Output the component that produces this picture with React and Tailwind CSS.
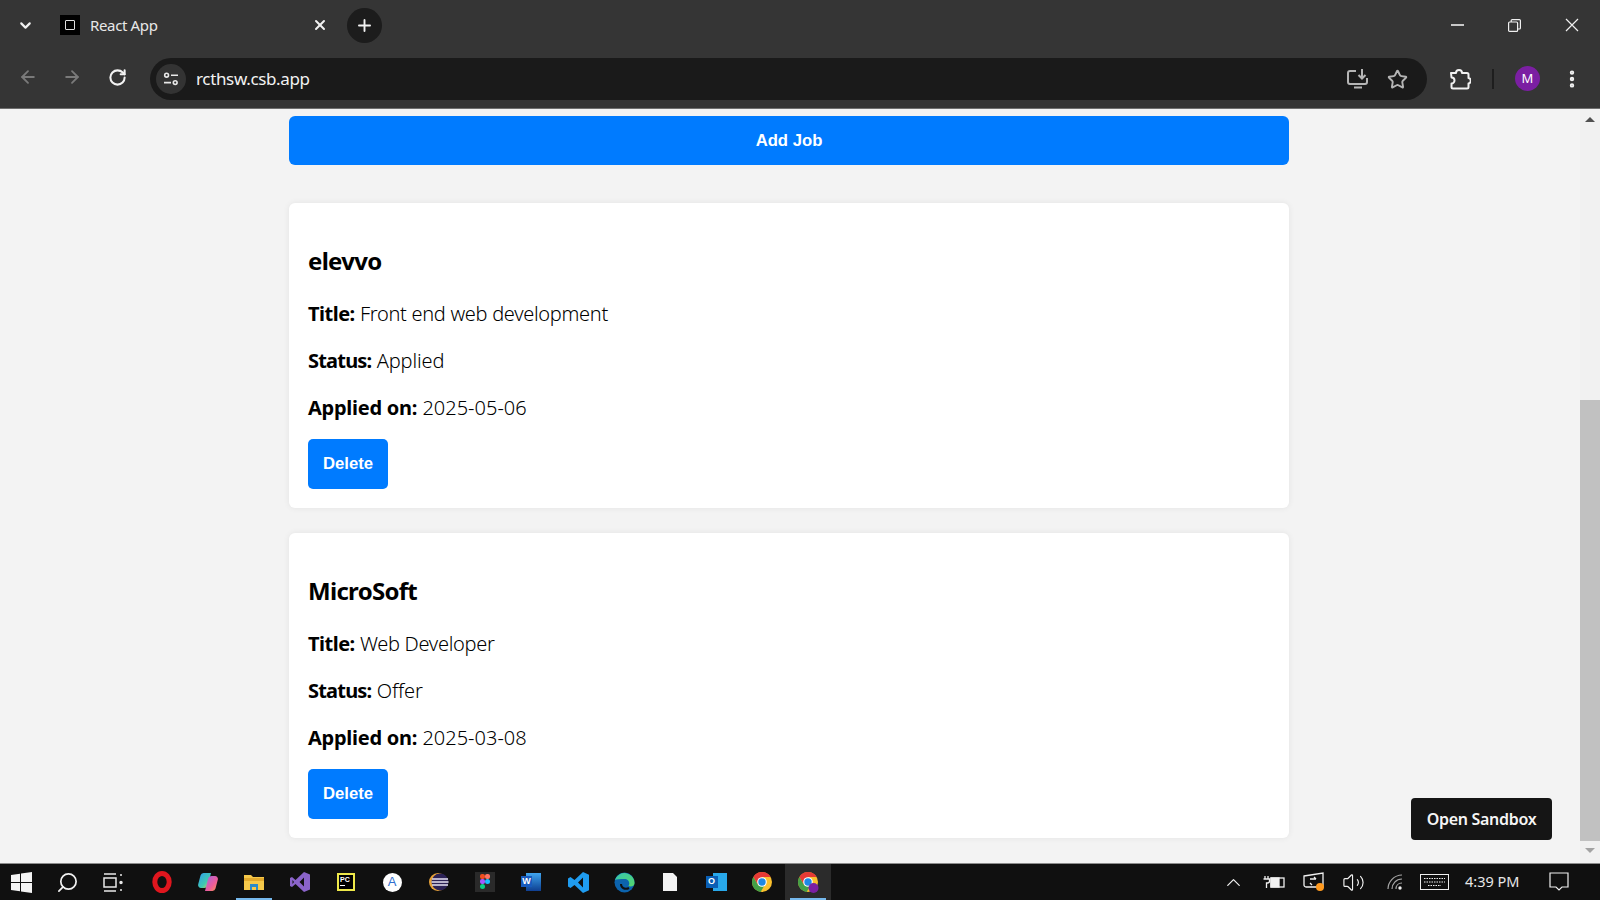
import React from "react";
import {
  ChevronDown,
  X,
  Plus,
  ArrowLeft,
  ArrowRight,
  RotateCw,
  Star,
  EllipsisVertical,
  Search,
  ChevronUp,
  Volume2,
} from "lucide-react";

const jobs = [
  { company: "elevvo", title: "Front end web development", status: "Applied", date: "2025-05-06" },
  { company: "MicroSoft", title: "Web Developer", status: "Offer", date: "2025-03-08" },
];

const Row = ({ label, value, labelClass, valueClass }) => (
  <p className="h-[47px] text-[20px] leading-[47px] text-black">
    <b className={`font-bold ${labelClass}`}>{label}:</b> <span className={`font-light ${valueClass}`}>{value}</span>
  </p>
);

const JobCard = ({ job }) => (
  <div className="h-[305px] rounded-[6px] bg-white px-[19px] pt-[40px] shadow-[0_0_6px_rgba(0,0,0,0.07)]">
    <h3 className="h-[47px] text-[24px] font-bold leading-[36px] tracking-[-0.7px] text-black">{job.company}</h3>
    <Row label="Title" value={job.title} labelClass="tracking-[-0.5px]" valueClass="tracking-[-0.3px]" />
    <Row label="Status" value={job.status} labelClass="tracking-[-0.8px]" valueClass="tracking-[-0.1px]" />
    <Row label="Applied on" value={job.date} labelClass="tracking-[-0.25px]" valueClass="tracking-[0px]" />
    <button className="mt-[8px] h-[50px] w-[80px] rounded-[5px] bg-[#007bff] font-['Liberation_Sans',sans-serif] text-[16.700px] font-bold text-white">
      Delete
    </button>
  </div>
);

const TabStrip = () => (
  <div className="flex h-[57px] items-center pb-[7px] text-[#f1f1f1]">
    <div className="flex w-[50px] justify-center">
      <ChevronDown size={17} strokeWidth={3} />
    </div>
    <div className="ml-[10px] flex h-[20px] w-[20px] items-center justify-center bg-black">
      <div className="h-[10px] w-[10px] rounded-[1px] border border-[#e0e0e0]" />
    </div>
    <span className="ml-[10px] w-[222px] text-[15px] tracking-[-0.35px] text-[#e8e8e8]">React App</span>
    <X size={16} strokeWidth={3} />
    <div className="ml-[19px] flex h-[35px] w-[35px] items-center justify-center rounded-full bg-[#1c1c1c]">
      <Plus size={19} strokeWidth={2.4} />
    </div>
    <div className="ml-auto flex items-center">
      <div className="flex w-[57px] justify-center">
        <div className="h-[2px] w-[13px] bg-[#c8c8c8]" />
      </div>
      <div className="flex w-[57px] justify-center">
        <svg width="13" height="13" viewBox="0 0 13 13" fill="none" stroke="#f0f0f0" strokeWidth="1.2">
          <rect x="0.6" y="3" width="9" height="9.4" rx="1" />
          <path d="M3.2 3V1.6a1 1 0 0 1 1-1h7.2a1 1 0 0 1 1 1V9a1 1 0 0 1-1 1H9.6" />
        </svg>
      </div>
      <div className="flex w-[57px] justify-center">
        <svg width="14" height="14" viewBox="0 0 14 14" stroke="#f0f0f0" strokeWidth="1.2">
          <path d="M1 1l12 12M13 1L1 13" />
        </svg>
      </div>
    </div>
  </div>
);

const Toolbar = () => (
  <div className="flex h-[51px] items-start">
    <div className="flex w-[150px] items-center pl-[18px] pt-[10px]">
      <ArrowLeft size={20} strokeWidth={2.2} className="text-[#7a7a7a]" />
      <ArrowRight size={20} strokeWidth={2.2} className="ml-[24px] text-[#7a7a7a]" />
      <RotateCw size={19} strokeWidth={2.6} className="ml-[26px] text-[#f2f2f2]" />
    </div>
    <div className="mt-[1px] flex h-[42px] w-[1277px] items-center rounded-full bg-[#1a1a1a] pl-[6px] pr-[19px]">
      <div className="flex h-[30px] w-[30px] items-center justify-center rounded-full bg-[#333333]">
        <svg width="16" height="14" viewBox="0 0 16 14" fill="none" stroke="#e8e8e8" strokeWidth="1.6">
          <circle cx="3.6" cy="3.2" r="1.9" />
          <path d="M8 3.2h7M1 10.6h7" />
          <circle cx="12.2" cy="10.6" r="1.9" />
        </svg>
      </div>
      <span className="ml-[10px] text-[17px] tracking-[-0.35px] text-[#f2f2f2]">rcthsw.csb.app</span>
      <div className="ml-auto flex items-center gap-[18px]">
        <svg width="22" height="20" viewBox="0 0 22 20" fill="none" stroke="#b5b5b5" strokeWidth="2">
          <path d="M9 2H3a2 2 0 0 0-2 2v9a2 2 0 0 0 2 2h15a2 2 0 0 0 2-2V9" />
          <path d="M15 0v9M11.5 6l3.5 3.5L18.500 6M7 18.500h8" />
        </svg>
        <Star size={21} strokeWidth={2.2} className="text-[#b5b5b5]" />
      </div>
    </div>
    <div className="flex items-center pt-[9px]">
      <svg className="ml-[22px]" width="22" height="22" viewBox="0 0 22 22" fill="none" stroke="#f2f2f2" strokeWidth="2" strokeLinejoin="round">
        <path d="M2 5h5a3 3 0 0 1 6 0h5a1.500 1.500 0 0 1 1.500 1.500V10a2.800 2.800 0 0 1 0 5.500V19a1.500 1.500 0 0 1-1.500 1.500H4a1.500 1.500 0 0 1-1.500-1.500v-3.500a3 3 0 0 0 0-6z" />
      </svg>
      <div className="ml-[21px] h-[20px] w-[2px] bg-[#1e1e1e]" />
      <div className="ml-[21px] flex h-[25px] w-[25px] items-center justify-center rounded-full bg-[#7b1fa2] text-[13px] text-white">
        M
      </div>
      <EllipsisVertical size={22} strokeWidth={2.8} className="ml-[21px] text-[#f2f2f2]" />
    </div>
  </div>
);

const Scrollbar = () => (
  <div className="flex w-[20px] flex-col items-center bg-[#f1f1f1]">
    <div className="mt-[8px] h-0 w-0 border-x-[5px] border-b-[5px] border-x-transparent border-b-[#505050]" />
    <div className="mt-[278px] h-[441px] w-full bg-[#c1c1c1]" />
    <div className="mt-[7px] h-0 w-0 border-x-[5px] border-t-[5px] border-x-transparent border-t-[#a3a3a3]" />
  </div>
);

const Slot = ({ active, children }) => (
  <div className={`relative flex h-[36px] w-[46px] items-center justify-center ${active === 2 ? "bg-[#2b2b2b]" : ""}`}>
    {children}
    {active ? <div className="absolute bottom-0 left-[5px] right-[5px] h-[2px] bg-[#76b9ed]" /> : null}
  </div>
);

const ChromeLogo = ({ badge }) => (
  <svg width="22" height="22" viewBox="0 0 22 22">
    <circle cx="11" cy="11" r="10" fill="#fbc02d" />
    <path d="M11 1a10 10 0 0 0-8.660 5L6.700 13.500 11 6h8.660A10 10 0 0 0 11 1z" fill="#e53935" />
    <path d="M2.340 6A10 10 0 0 0 9.600 20.900L14 13.500H6.700z" fill="#43a047" />
    <circle cx="11" cy="11" r="4.800" fill="#fff" />
    <circle cx="11" cy="11" r="3.700" fill="#1e88e5" />
    {badge ? <circle cx="16.500" cy="17" r="5" fill="#7b1fa2" /> : null}
  </svg>
);

const Taskbar = () => (
  <div className="flex h-[37px] items-center border-t border-[#8c8c8c] bg-[#101010] text-[#f0f0f0]">
    <div className="-ml-[2px]" />
    <Slot>
      <svg width="21" height="21" viewBox="0 0 21 21" fill="#f4f4f4">
        <path d="M0 3l9-1.300V10H0zM10 1.500L21 0v10H10zM0 11h9v8.300L0 18zM10 11h11v10l-11-1.500z" />
      </svg>
    </Slot>
    <Slot>
      <Search size={23} strokeWidth={1.800} className="-scale-x-100" />
    </Slot>
    <Slot>
      <svg width="21" height="19" viewBox="0 0 21 19" fill="none" stroke="#e8e8e8" strokeWidth="1.500">
        <path d="M1 1h12M1 18h12" />
        <rect x="1" y="5" width="12" height="9" />
        <circle cx="18" cy="9.500" r="1" fill="#e8e8e8" />
        <path d="M18 1v2M18 16v2" />
      </svg>
    </Slot>
    <div className="w-[3px]" />
    <Slot>
      <svg width="20" height="22" viewBox="0 0 20 22" fill="none">
        <ellipse cx="10" cy="11" rx="7.200" ry="8.500" stroke="#e0161e" strokeWidth="5" />
      </svg>
    </Slot>
    <Slot>
      <svg width="20" height="20" viewBox="0 0 20 20">
        <defs>
          <linearGradient id="cp1" x1="0" y1="0" x2="1" y2="1">
            <stop offset="0" stopColor="#2f9cf0" />
            <stop offset="0.600" stopColor="#3fc9b0" />
            <stop offset="1" stopColor="#f0d24a" />
          </linearGradient>
          <linearGradient id="cp2" x1="0" y1="0" x2="1" y2="1">
            <stop offset="0" stopColor="#9a6ae8" />
            <stop offset="0.600" stopColor="#ee5c9a" />
            <stop offset="1" stopColor="#f59a4a" />
          </linearGradient>
        </defs>
        <path d="M5.500 1h7.500l-3 12a4 4 0 0 1-4 3H3a3 3 0 0 1-2.800-3.800L2.500 3.500A3.500 3.500 0 0 1 5.500 1z" fill="url(#cp1)" />
        <path d="M14.500 19H7l3-12a4 4 0 0 1 4-3h3a3 3 0 0 1 2.800 3.800l-2.300 8.700a3.500 3.500 0 0 1-3 2.500z" fill="url(#cp2)" />
      </svg>
    </Slot>
    <Slot active={1}>
      <svg width="20" height="17" viewBox="0 0 20 17">
        <path d="M0 1h7l2 2h11v13H0z" fill="#f5c84a" />
        <path d="M0 4h20v3H0z" fill="#e2a92c" />
        <path d="M6 10h8v6h-2v-3H8v3H6z" fill="#2a8ac9" />
      </svg>
    </Slot>
    <Slot>
      <svg width="20" height="20" viewBox="0 0 20 20">
        <path d="M14 0l6 2.500v15L14 20 5.500 12 2 15 0 14V6l2-1 3.500 3zM14 5.500L9.500 10l4.500 4.500zM2.500 8v4L4 10z" fill="#8a63c9" />
      </svg>
    </Slot>
    <Slot>
      <div className="flex h-[18px] w-[18px] items-start justify-center bg-[#eee84a] p-[2px]">
        <div className="flex h-full w-full flex-col bg-black px-[1px]">
          <span className="font-['Liberation_Sans',sans-serif] text-[7px] font-bold leading-[9px] text-white">PC</span>
          <div className="mt-[1px] h-[1px] w-[5px] bg-white" />
        </div>
      </div>
    </Slot>
    <Slot>
      <div className="flex h-[19px] w-[19px] items-center justify-center rounded-full bg-white font-['Liberation_Sans',sans-serif] text-[13px] text-[#2f6fd0]">
        A
      </div>
    </Slot>
    <div className="w-[1px]" />
    <Slot>
      <svg width="20" height="18" viewBox="0 0 20 18">
        <circle cx="9" cy="9" r="9" fill="#e8a33a" />
        <circle cx="11" cy="9" r="8.500" fill="#2c2255" />
        <path d="M3 6h16M2.500 9h17M3 12h16" stroke="#e6e2f2" strokeWidth="1.500" />
      </svg>
    </Slot>
    <Slot>
      <div className="flex h-[20px] w-[20px] items-center justify-center bg-[#2a2a2a]">
        <svg width="10" height="16" viewBox="0 0 10 16">
          <rect x="0" y="0" width="5" height="5" rx="2" fill="#f24e1e" />
          <rect x="5" y="0" width="5" height="5" rx="2" fill="#ff7262" />
          <rect x="0" y="5" width="5" height="5" rx="2" fill="#a259ff" />
          <circle cx="7.500" cy="7.500" r="2.500" fill="#1abcfe" />
          <rect x="0" y="10" width="5" height="5" rx="2.500" fill="#0acf83" />
        </svg>
      </div>
    </Slot>
    <Slot>
      <div className="relative h-[18px] w-[20px]">
        <div className="absolute right-0 top-0 h-full w-[15px] bg-gradient-to-b from-[#41a5ee] to-[#103f91]" />
        <div className="absolute left-0 top-[3px] flex h-[11px] w-[11px] items-center justify-center bg-[#185abd] font-['Liberation_Sans',sans-serif] text-[9px] font-bold text-white">
          W
        </div>
      </div>
    </Slot>
    <div className="w-[1px]" />
    <Slot>
      <svg width="21" height="21" viewBox="0 0 21 21">
        <path d="M15 0l6 2.800v15.400L15 21 6.500 13l-4 3L0 14.500v-8L2.500 5l4 3zM15 5.500L10 10.500l5 5z" fill="#1f9cf0" />
      </svg>
    </Slot>
    <Slot>
      <svg width="21" height="21" viewBox="0 0 21 21">
        <defs>
          <linearGradient id="edge" x1="0" y1="0" x2="1" y2="1">
            <stop offset="0" stopColor="#37c6b0" />
            <stop offset="1" stopColor="#55d66b" />
          </linearGradient>
        </defs>
        <circle cx="10.500" cy="10.500" r="10" fill="#0c63ad" />
        <path d="M1 8a10 10 0 0 1 19.500 3.500c0 3-4 3.500-6 2.500 2-3 0-7-4-7-4 0-8 0-9.500 1z" fill="url(#edge)" />
        <path d="M7 12c0 4 4 6 8 4" stroke="#101010" strokeWidth="2" fill="none" />
      </svg>
    </Slot>
    <Slot>
      <svg width="14" height="18" viewBox="0 0 14 18">
        <path d="M0 0h10l4 4v14H0z" fill="#f2f2f2" />
      </svg>
    </Slot>
    <Slot>
      <div className="relative h-[18px] w-[21px]">
        <div className="absolute right-0 top-0 h-full w-[14px] bg-[#28a8ea]" />
        <div className="absolute left-0 top-[3px] flex h-[12px] w-[12px] items-center justify-center bg-[#0a5fb4] font-['Liberation_Sans',sans-serif] text-[9px] font-bold text-white">
          O
        </div>
      </div>
    </Slot>
    <Slot>
      <ChromeLogo />
    </Slot>
    <Slot active={2}>
      <ChromeLogo badge />
    </Slot>

    <div className="ml-auto flex items-center">
      <ChevronUp size={23} strokeWidth={1.300} />
      <svg className="ml-[18px]" width="22" height="14" viewBox="0 0 22 14" fill="none" stroke="#f0f0f0" strokeWidth="1.300">
        <path d="M2 1v3M5 1v3M0.500 4h6v2a2 2 0 0 1-2 2H3.500V13" />
        <rect x="8" y="3" width="13" height="9" />
        <rect x="8" y="3" width="8" height="9" fill="#f0f0f0" />
      </svg>
      <svg className="ml-[18px]" width="22" height="20" viewBox="0 0 22 20" fill="none" stroke="#f0f0f0" strokeWidth="1.300">
        <path d="M1 4l19-3v14H3a2 2 0 0 1-2-2z" />
        <path d="M7 7h6M13 7l-2-2M7 11l2 2" />
        <circle cx="17" cy="15" r="4" fill="#ff9a1f" stroke="none" />
      </svg>
      <Volume2 size={23} strokeWidth={1.200} className="ml-[17px]" />
      <svg className="ml-[22px]" width="16" height="16" viewBox="0 0 16 16" fill="none" stroke="#a8a8a8" strokeWidth="1.200">
        <path d="M1 15C1 8 7 1 15 1M5 15c0-5 4-10 10-10M9 15c0-3 2-6 6-6" />
        <circle cx="13" cy="14" r="1.700" fill="#f0f0f0" stroke="none" />
      </svg>
      <svg className="ml-[17px]" width="29" height="16" viewBox="0 0 29 16" fill="none" stroke="#f0f0f0" strokeWidth="1">
        <rect x="0.500" y="0.500" width="28" height="15" />
        <path d="M4 4.500h21M4 8h21M8 11.500h13" strokeDasharray="1.500 1" />
      </svg>
      <span className="ml-[16px] w-[60px] text-[14.500px] text-[#e6e6e6]">4:39 PM</span>
      <svg className="ml-[24px]" width="20" height="20" viewBox="0 0 20 20" fill="none" stroke="#f0f0f0" strokeWidth="1.200">
        <path d="M1 1h18v14h-6l-3 3-3-3H1z" />
      </svg>
      <div className="w-[31px]" />
    </div>
  </div>
);

const App = () => {
  return (
    <div className="flex h-[900px] w-[1600px] flex-col overflow-hidden bg-[#f3f3f3] font-['Noto_Sans',sans-serif]">
      <div className="h-[109px] border-b border-[#6e6e6e] bg-[#353535]">
        <TabStrip />
        <Toolbar />
      </div>

      <div className="relative flex h-[754px]">
        <main className="flex-1 pl-[289px] pt-[7px]">
          <div className="w-[1000px]">
            <button className="h-[49px] w-full rounded-[6px] bg-[#007bff] font-['Liberation_Sans',sans-serif] text-[16.700px] font-bold text-white">
              Add Job
            </button>
            <div className="mt-[38px] flex flex-col gap-[25px]">
              {jobs.map((job) => (
                <JobCard key={job.company} job={job} />
              ))}
            </div>
          </div>
        </main>
        <Scrollbar />
        <button className="absolute left-[1411px] top-[689px] h-[42px] w-[141px] rounded-[4px] bg-[#151515] text-[16px] font-semibold tracking-[-0.3px] text-[#f5f5f5]">
          Open Sandbox
        </button>
      </div>

      <Taskbar />
    </div>
  );
};

export default App;
